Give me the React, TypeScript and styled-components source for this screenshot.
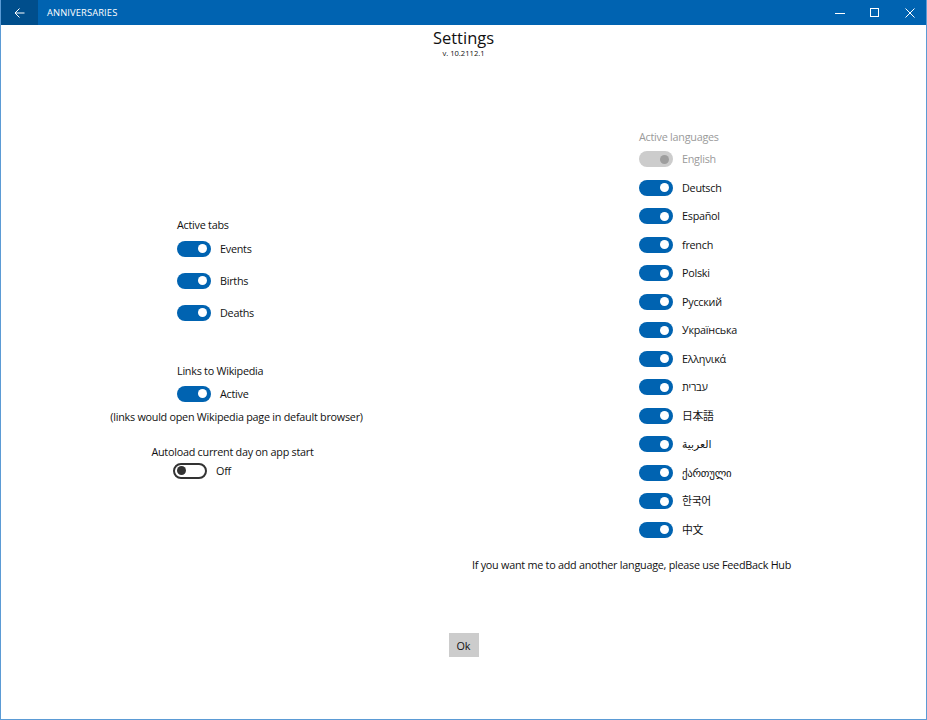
import React, { useState, FC } from 'react';
import styled, { createGlobalStyle, css } from 'styled-components';

const GlobalStyle = createGlobalStyle`
  html, body {
    margin: 0;
    padding: 0;
    background: #ffffff;
  }
  body {
    font-family: 'Open Sans', 'DejaVu Sans', 'Noto Sans CJK JP', sans-serif;
    color: #111111;
  }
`;

const Window = styled.div`
  width: 927px;
  height: 720px;
  box-sizing: border-box;
  display: flex;
  flex-direction: column;
  border: 1px solid #5b9bd5;
  border-top: 0;
  background: #ffffff;
  overflow: hidden;
`;

const TitleBar = styled.header`
  height: 25px;
  flex: none;
  display: flex;
  align-items: stretch;
  background: #0063b1;
  color: #ffffff;
  margin: 0 -1px;
`;

const BackButton = styled.button`
  width: 38px;
  border: 0;
  padding: 0;
  background: #004e8c;
  color: #ffffff;
  display: flex;
  align-items: center;
  justify-content: center;
  cursor: pointer;
`;

const AppTitle = styled.div`
  flex: 1;
  display: flex;
  align-items: center;
  padding-left: 9px;
  font-size: 9.4px;
  letter-spacing: 0.1px;
  text-transform: uppercase;
`;

const WindowControls = styled.div`
  display: flex;
`;

const ControlButton = styled.button`
  width: 35px;
  border: 0;
  padding: 0;
  background: transparent;
  display: flex;
  align-items: center;
  justify-content: center;
  color: #ffffff;
  &:hover {
    background: rgba(255, 255, 255, 0.15);
  }
`;

const Header = styled.div`
  display: flex;
  flex-direction: column;
  align-items: center;
  padding-top: 2px;
`;

const Title = styled.h1`
  margin: 0;
  font-size: 16.5px;
  font-weight: 400;
  line-height: 22px;
`;

const Version = styled.div`
  font-size: 7.6px;
  line-height: 11px;
  margin-top: -1px;
`;

const Body = styled.main`
  display: grid;
  grid-template-columns: 471px 1fr;
  align-items: center;
  height: 480px;
  margin-top: 50px;
`;

const LeftColumn = styled.section`
  display: flex;
  flex-direction: column;
  align-items: center;
`;

type GroupProps = { shift?: number; gapTop?: number };

const Group = styled.div<GroupProps>`
  display: flex;
  flex-direction: column;
  align-items: center;
  margin-top: ${(p) => p.gapTop ?? 0}px;
  ${(p) =>
    p.shift &&
    css`
      margin-right: ${p.shift}px;
    `}
`;

const Block = styled.div`
  width: 118px;
  display: flex;
  flex-direction: column;
  margin-left: -1px;
`;

const textStyle = css`
  font-size: 10.8px;
  letter-spacing: -0.25px;
  line-height: 16px;
  white-space: nowrap;
`;

const Label = styled.div<{ muted?: boolean }>`
  ${textStyle}
  color: ${(p) => (p.muted ? '#9a9a9a' : '#111111')};
`;

type RowProps = { h: number };

const Row = styled.label<RowProps>`
  height: ${(p) => p.h}px;
  display: flex;
  align-items: center;
  gap: 9px;
  cursor: pointer;
`;

type SwitchProps = { on: boolean; disabled?: boolean };

const Track = styled.span<SwitchProps>`
  position: relative;
  width: 34px;
  height: 16px;
  box-sizing: border-box;
  border-radius: 8px;
  flex: none;
  background: #0063b1;
  ${(p) =>
    !p.on &&
    css`
      background: transparent;
      border: 2px solid #333333;
    `}
  ${(p) =>
    p.disabled &&
    css`
      background: #cccccc;
      border: 0;
    `}
`;

const Knob = styled.span<SwitchProps>`
  position: absolute;
  top: 50%;
  width: 9px;
  height: 9px;
  margin-top: -4.5px;
  border-radius: 50%;
  background: #ffffff;
  right: 4px;
  ${(p) =>
    !p.on &&
    css`
      right: auto;
      left: 2px;
      background: #333333;
    `}
  ${(p) =>
    p.disabled &&
    css`
      background: #9e9e9e;
    `}
`;

const Note = styled.div`
  ${textStyle}
`;

const RightColumn = styled.section`
  width: 318px;
  display: flex;
  flex-direction: column;
  align-items: center;
  padding-top: 4px;
`;

const LangList = styled.div`
  align-self: flex-start;
  margin-left: 167px;
  display: flex;
  flex-direction: column;
`;

const Footnote = styled.div`
  ${textStyle}
  width: 100%;
  margin-top: 13px;
  text-align: center;
`;

const Footer = styled.footer`
  display: flex;
  justify-content: center;
  margin-top: 44px;
`;

const OkButton = styled.button`
  width: 30px;
  height: 24px;
  border: 0;
  padding: 0;
  background: #cccccc;
  color: #111111;
  font-family: inherit;
  font-size: 10.8px;
  cursor: pointer;
`;

type ToggleProps = {
  label: string;
  on: boolean;
  disabled?: boolean;
  height: number;
  onToggle?: () => void;
};

const Toggle: FC<ToggleProps> = ({ label, on, disabled, height, onToggle }) => (
  <Row h={height} onClick={() => !disabled && onToggle && onToggle()}>
    <Track on={on} disabled={disabled}>
      <Knob on={on} disabled={disabled} />
    </Track>
    <Label muted={disabled}>{label}</Label>
  </Row>
);

const languages = [
  'English',
  'Deutsch',
  'Español',
  'french',
  'Polski',
  'Русский',
  'Українська',
  'Ελληνικά',
  'עברית',
  '日本語',
  'العربية',
  'ქართული',
  '한국어',
  '中文',
];

const BackArrow = () => (
  <svg width="11" height="10" viewBox="0 0 11 10" fill="none" stroke="currentColor" strokeWidth="1">
    <path d="M10.5 5H1M5.5 0.5L1 5l4.5 4.5" />
  </svg>
);

const MinimizeIcon = () => (
  <svg width="10" height="10" viewBox="0 0 10 10" stroke="currentColor" strokeWidth="1">
    <path d="M0 5.5h10" />
  </svg>
);

const MaximizeIcon = () => (
  <svg width="10" height="10" viewBox="0 0 10 10" fill="none" stroke="currentColor" strokeWidth="1">
    <rect x="0.5" y="0.5" width="8" height="8" />
  </svg>
);

const CloseIcon = () => (
  <svg width="10" height="10" viewBox="0 0 10 10" stroke="currentColor" strokeWidth="1">
    <path d="M0.5 0.5l9 9M9.5 0.5l-9 9" />
  </svg>
);

export default function App() {
  const [tabs, setTabs] = useState({ Events: true, Births: true, Deaths: true });
  const [links, setLinks] = useState(true);
  const [autoload, setAutoload] = useState(false);
  const [langs, setLangs] = useState<Record<string, boolean>>(() =>
    Object.fromEntries(languages.map((l) => [l, true]))
  );

  return (
    <>
      <GlobalStyle />
      <Window>
        <TitleBar>
          <BackButton aria-label="Back">
            <BackArrow />
          </BackButton>
          <AppTitle>Anniversaries</AppTitle>
          <WindowControls>
            <ControlButton aria-label="Minimize">
              <MinimizeIcon />
            </ControlButton>
            <ControlButton aria-label="Maximize">
              <MaximizeIcon />
            </ControlButton>
            <ControlButton aria-label="Close">
              <CloseIcon />
            </ControlButton>
          </WindowControls>
        </TitleBar>

        <Header>
          <Title>Settings</Title>
          <Version>v. 10.2112.1</Version>
        </Header>

        <Body>
          <LeftColumn>
            <Group>
              <Block>
                <Label>Active tabs</Label>
                {(Object.keys(tabs) as (keyof typeof tabs)[]).map((k) => (
                  <Toggle
                    key={k}
                    label={k}
                    on={tabs[k]}
                    height={32}
                    onToggle={() => setTabs({ ...tabs, [k]: !tabs[k] })}
                  />
                ))}
              </Block>
            </Group>

            <Group gapTop={34}>
              <Block>
                <Label>Links to Wikipedia</Label>
                <Toggle label={links ? 'Active' : 'Off'} on={links} height={30} onToggle={() => setLinks(!links)} />
              </Block>
              <Note>(links would open Wikipedia page in default browser)</Note>
            </Group>

            <Group shift={8} gapTop={19}>
              <Label>Autoload current day on app start</Label>
              <Block>
                <Toggle
                  label={autoload ? 'On' : 'Off'}
                  on={autoload}
                  height={22}
                  onToggle={() => setAutoload(!autoload)}
                />
              </Block>
            </Group>
          </LeftColumn>

          <RightColumn>
            <LangList>
              <Label muted>Active languages</Label>
              {languages.map((l, i) => (
                <Toggle
                  key={l}
                  label={l}
                  on={langs[l]}
                  disabled={i === 0}
                  height={28.5}
                  onToggle={() => setLangs({ ...langs, [l]: !langs[l] })}
                />
              ))}
            </LangList>
            <Footnote>If you want me to add another language, please use FeedBack Hub</Footnote>
          </RightColumn>
        </Body>

        <Footer>
          <OkButton>Ok</OkButton>
        </Footer>
      </Window>
    </>
  );
}
